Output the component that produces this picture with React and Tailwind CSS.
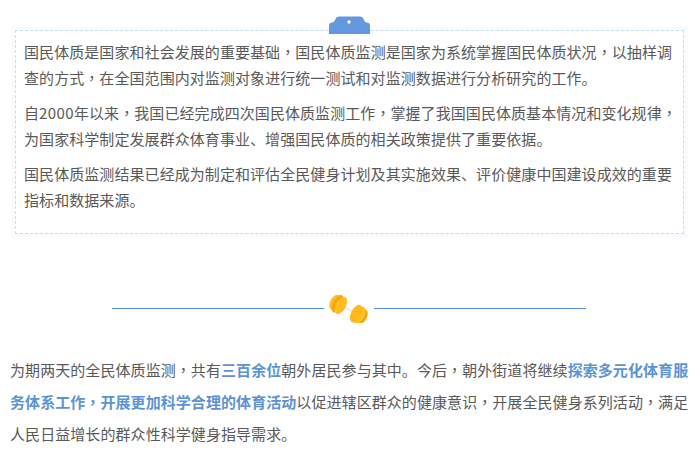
function C() {
  return <span className="font-['Noto_Sans_CJK_TC']">，</span>;
}

export default function App() {
  const font = { fontFamily: '"Noto Sans CJK SC", sans-serif' };
  return (
    <div className="w-[700px] h-[459px] overflow-hidden bg-white text-[15px] text-[#595959] tracking-[0.07px]" style={font}>
      <div className="h-[26px] relative">
        <svg width="41" height="18" viewBox="0 0 41 18" className="absolute left-[329px] top-[16px]">
          <path d="M0 18V9Q0 7 2 6.700L5 6L7 2Q8 0.500 10 0.500H31Q33 0.500 34 2L36 6L39 6.700Q41 7 41 9V18Z" fill="#6398e0" />
          <circle cx="20" cy="6" r="1.700" fill="#fff" />
        </svg>
      </div>
      <div className="mx-[11px] w-[677px] h-[212px] bg-[#f9fbff] p-[4px]">
        <div className="h-full bg-white border border-dashed border-[#c5daf3] pl-[8px] pr-[2px] pt-[8px]">
          <p className="leading-[26px] mb-[9px]">国民体质是国家和社会发展的重要基础<C />国民体质监测是国家为系统掌握国民体质状况<C />以抽样调查的方式<C />在全国范围内对监测对象进行统一测试和对监测数据进行分析研究的工作。</p>
          <p className="leading-[26px] mb-[9px]">自<span className="tracking-[0.4px]">2000</span>年以来<C />我国已经完成四次国民体质监测工作<C />掌握了我国国民体质基本情况和变化规律<C />为国家科学制定发展群众体育事业、增强国民体质的相关政策提供了重要依据。</p>
          <p className="leading-[26px]">国民体质监测结果已经成为制定和评估全民健身计划及其实施效果、评价健康中国建设成效的重要指标和数据来源。</p>
        </div>
      </div>
      <div className="flex items-center justify-center h-[30px] mt-[55px] ml-[112px] w-[474px]">
        <div className="flex-1 h-px bg-[#4f90d8]" />
        <svg width="50" height="30" viewBox="0 0 50 30" className="shrink-0">
          <line x1="16" y1="12" x2="33" y2="21" stroke="#eeeeee" strokeWidth="3" />
          <g transform="rotate(28 16 12)">
            <ellipse cx="10" cy="12" rx="4.500" ry="8" fill="#ffc02e" />
            <ellipse cx="13.500" cy="12" rx="5" ry="9.500" fill="#f8a60c" />
            <ellipse cx="17" cy="12" rx="5" ry="9.500" fill="#ffbd24" />
          </g>
          <g transform="rotate(28 33 21)">
            <ellipse cx="39" cy="21" rx="4.500" ry="8" fill="#f8a60c" />
            <ellipse cx="35.500" cy="21" rx="5" ry="9.500" fill="#ffc02e" />
            <ellipse cx="32" cy="21" rx="5" ry="9.500" fill="#ffb81c" />
          </g>
        </svg>
        <div className="flex-1 h-px bg-[#4f90d8]" />
      </div>
      <p className="mt-[31px] mx-[10px] leading-[32px]">
        为期两天的全民体质监测<C />共有<b className="text-[#5b93d3]">三百余位</b>朝外居民参与其中。今后<C />朝外街道将继续<b className="text-[#5b93d3]">探索多元化体育服务体系工作<C />开展更加科学合理的体育活动</b>以促进辖区群众的健康意识<C />开展全民健身系列活动<C />满足人民日益增长的群众性科学健身指导需求。
      </p>
    </div>
  );
}
